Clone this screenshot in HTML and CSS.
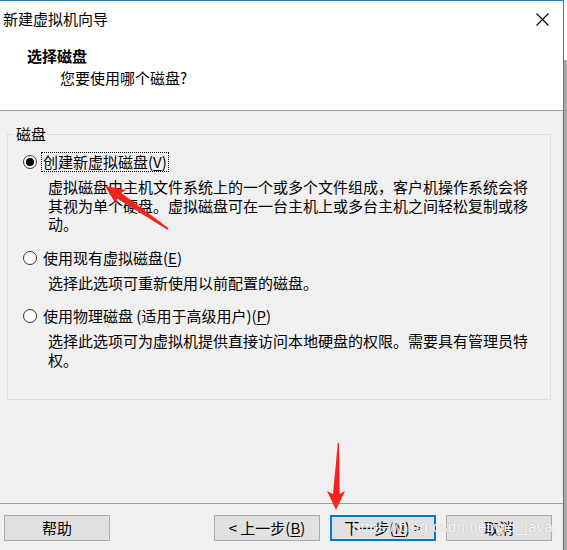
FILE: index.html
```html
<!DOCTYPE html>
<html lang="zh-CN">
<head>
<meta charset="utf-8">
<title>新建虚拟机向导</title>
<link rel="stylesheet" href="styles.css">
</head>
<body>
<div class="screen">
  <div class="window">
    <div class="header">
      <div class="titlebar">
        <span class="title">新建虚拟机向导</span>
        <svg class="close" width="13" height="13" viewBox="0 0 13 13"><path d="M0.5 0.5 L12.5 12.5 M12.5 0.5 L0.5 12.5" stroke="#000" stroke-width="1.1" fill="none"/></svg>
      </div>
      <div class="heading">选择磁盘</div>
      <div class="subheading">您要使用哪个磁盘?</div>
    </div>
    <div class="content">
      <fieldset class="group">
        <legend>磁盘</legend>
        <div class="option first">
          <div class="opt-row"><span class="radio checked"></span><span class="label focus">创建新虚拟磁盘(<u>V</u>)</span></div>
          <p class="desc">虚拟磁盘由主机文件系统上的一个或多个文件组成，客户机操作系统会将其视为单个硬盘。虚拟磁盘可在一台主机上或多台主机之间轻松复制或移动。</p>
        </div>
        <div class="option">
          <div class="opt-row"><span class="radio"></span><span class="label">使用现有虚拟磁盘(<u>E</u>)</span></div>
          <p class="desc">选择此选项可重新使用以前配置的磁盘。</p>
        </div>
        <div class="option">
          <div class="opt-row"><span class="radio"></span><span class="label">使用物理磁盘 (适用于高级用户)(<u>P</u>)</span></div>
          <p class="desc">选择此选项可为虚拟机提供直接访问本地硬盘的权限。需要具有管理员特权。</p>
        </div>
      </fieldset>
    </div>
    <div class="footer">
      <button class="btn">帮助</button>
      <div class="spacer"></div>
      <button class="btn">&lt; 上一步(<u>B</u>)</button>
      <button class="btn default">下一步(<u>N</u>) &gt;</button>
      <button class="btn">取消</button>
    </div>
  </div>
  <div class="edge"></div>
  <svg class="annot" width="567" height="550" viewBox="0 0 567 550">
    <polygon fill="#f5231b" points="105,186 126.6,189.9 121,192.7 168.6,228.2 167.4,229.8 117,198.5 116.4,204.7"/>
    <polygon fill="#f5231b" points="336,510 345,491 339.6,494 339,443 337.8,443 333,494 327,491"/>
  </svg>
  <div class="watermark">https://blog.csdn.net/gid_java</div>
</div>
</body>
</html>
```

FILE: styles.css
```css
html, body {
  margin: 0;
  padding: 0;
  background: #fff;
}
body {
  font-family: "Noto Sans CJK SC", "Microsoft YaHei", sans-serif;
  font-size: 15px;
  color: #000;
}
.screen {
  position: relative;
  width: 567px;
  height: 550px;
  display: flex;
  overflow: hidden;
}
.window {
  width: 564px;
  height: 550px;
  box-sizing: border-box;
  border-top: 1px solid #1883d7;
  border-right: 1px solid #1883d7;
  background: #f0f0f0;
  display: flex;
  flex-direction: column;
}
.edge {
  flex: 1;
  background: linear-gradient(#fff 0 60px, #a9a9a9 60px);
}
.header {
  background: #fff;
  height: 109px;
  border-bottom: 1px solid #a0a0a0;
}
.titlebar {
  display: flex;
  justify-content: space-between;
  align-items: flex-start;
  padding: 8px 14px 0 3px;
  line-height: 20px;
}
.close {
  margin-top: 4px;
  display: block;
}
.heading {
  margin-top: 17px;
  padding-left: 27px;
  font-weight: bold;
  line-height: 20px;
}
.subheading {
  margin-top: 2px;
  padding-left: 60px;
  line-height: 20px;
}
.content {
  flex: 1;
  padding: 13px 0 0 7px;
}
.group {
  margin: 0;
  width: 544px;
  height: 276px;
  box-sizing: border-box;
  padding: 0 8px 0 6px;
  border: 1px solid #dcdcdc;
  min-width: 0;
}
.group legend {
  padding: 0 2px;
  line-height: 20px;
}
.option {
  margin-top: 14px;
}
.option.first {
  margin-top: 8px;
}
.opt-row {
  display: flex;
  align-items: center;
  height: 20px;
}
.radio {
  width: 14px;
  height: 14px;
  box-sizing: border-box;
  border: 1px solid #333;
  border-radius: 50%;
  background: #fff;
  margin-left: 9px;
  display: flex;
  align-items: center;
  justify-content: center;
}
.radio.checked::after {
  content: "";
  width: 8px;
  height: 8px;
  border-radius: 50%;
  background: #000;
}
.label {
  margin-left: 4px;
  padding: 0 1px;
  line-height: 18px;
  border: 1px dotted transparent;
  white-space: nowrap;
}
.label.focus {
  border-color: #000;
}
u {
  text-decoration: underline;
  text-underline-offset: 2px;
}
.desc {
  margin: 6px 0 0 34px;
  width: 485px;
  line-height: 18.5px;
}
.footer {
  height: 47px;
  box-sizing: border-box;
  border-top: 1px solid #a0a0a0;
  padding: 11px 11px 0 4px;
  display: flex;
  align-items: flex-start;
  gap: 10px;
}
.spacer {
  flex: 1;
}
.btn {
  width: 106px;
  height: 26px;
  box-sizing: border-box;
  border: 1px solid #adadad;
  background: #e1e1e1;
  font-family: inherit;
  font-size: 15px;
  color: #000;
  padding: 0;
  line-height: 22px;
  margin: 0;
}
.btn.default {
  border: 2px solid #0078d7;
}
.annot {
  position: absolute;
  left: 0;
  top: 0;
  pointer-events: none;
}
.watermark {
  position: absolute;
  left: 352px;
  top: 518px;
  font-family: "Liberation Sans", Arial, sans-serif;
  font-size: 15.5px;
  line-height: 18px;
  color: rgba(255, 255, 255, 0.95);
  text-shadow: 0 0 1px rgba(0, 0, 0, 0.3);
  pointer-events: none;
  white-space: nowrap;
}
```
